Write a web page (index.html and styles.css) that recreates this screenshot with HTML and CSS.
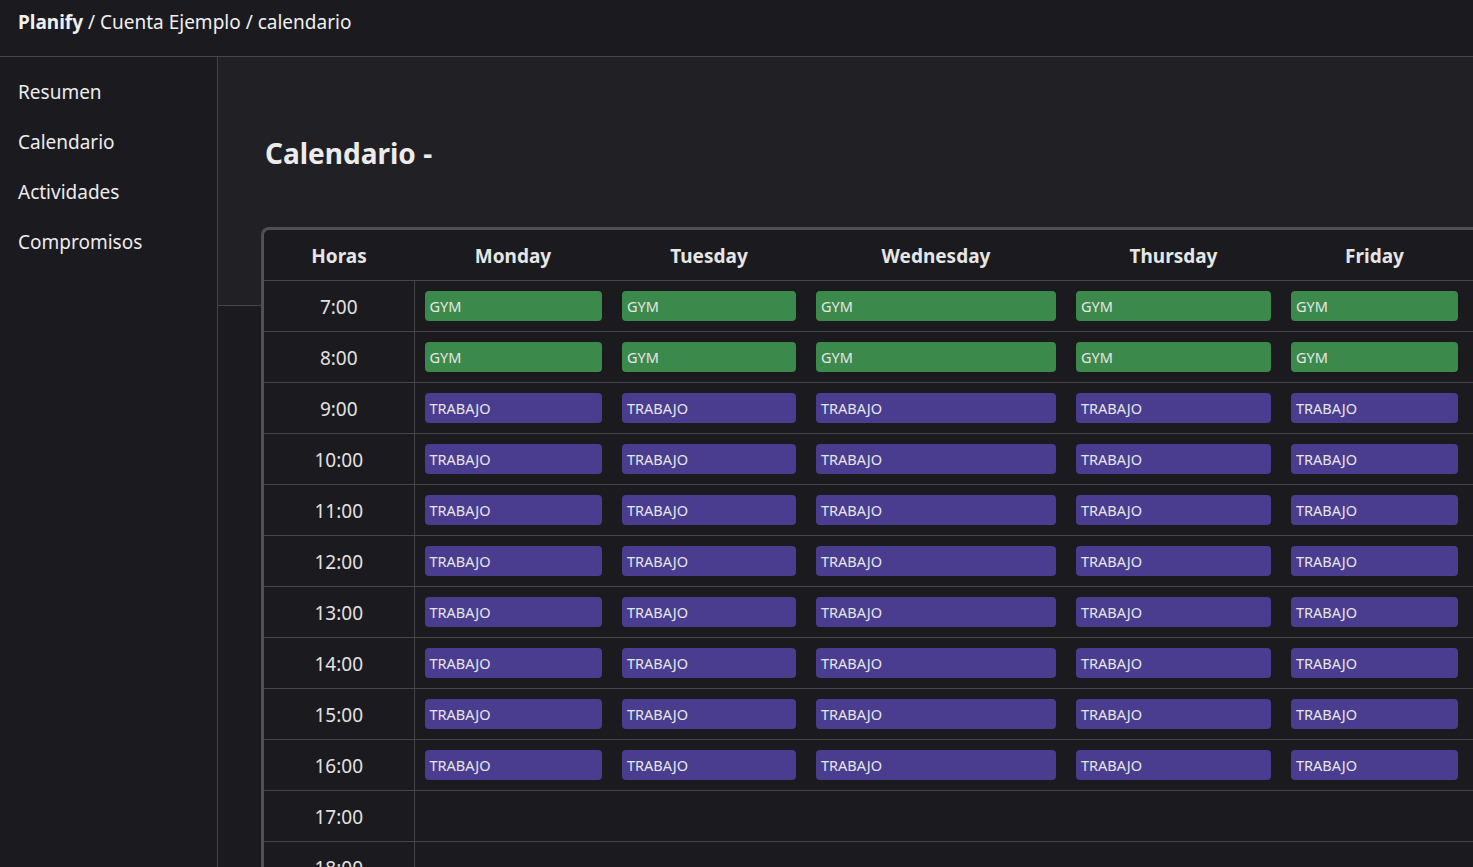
FILE: index.html
```html
<!DOCTYPE html>
<html lang="es">
<head>
<meta charset="utf-8">
<title>Planify - calendario</title>
<link rel="stylesheet" href="styles.css">
</head>
<body>
<header class="topbar">
  <span class="brand">Planify</span> / Cuenta Ejemplo / calendario
</header>
<div class="layout">
  <nav class="sidebar">
    <a class="nav-item">Resumen</a>
    <a class="nav-item">Calendario</a>
    <a class="nav-item">Actividades</a>
    <a class="nav-item">Compromisos</a>
  </nav>
  <main class="main">
    <section class="panel">
      <h1 class="title">Calendario -</h1>
      <div class="table-wrap">
        <table class="cal">
          <colgroup>
            <col class="c-hour"><col class="c-mon"><col class="c-tue"><col class="c-wed"><col class="c-thu"><col class="c-fri"><col class="c-rest">
          </colgroup>
          <thead>
            <tr><th class="hour">Horas</th><th>Monday</th><th>Tuesday</th><th>Wednesday</th><th>Thursday</th><th>Friday</th><th></th></tr>
          </thead>
          <tbody id="rows"></tbody>
        </table>
      </div>
    </section>
  </main>
</div>
<script src="app.js"></script>
</body>
</html>
```
FILE: app.js
```js
const tbody = document.getElementById('rows');
for (let h = 7; h <= 20; h++) {
  const tr = document.createElement('tr');
  const td = document.createElement('td');
  td.className = 'hour';
  td.textContent = h + ':00';
  tr.appendChild(td);
  for (let d = 0; d < 6; d++) {
    const c = document.createElement('td');
    c.className = 'slot';
    if (d < 5) {
      if (h <= 8) c.innerHTML = '<div class="ev gym">GYM</div>';
      else if (h <= 16) c.innerHTML = '<div class="ev work">TRABAJO</div>';
    }
    tr.appendChild(c);
  }
  tbody.appendChild(tr);
}
```
FILE: styles.css
```css
html, body { overflow: hidden; }
body {
  margin: 0;
  background: #1b1a1f;
  color: #e6e6e6;
  font-family: "Noto Sans", "Open Sans", sans-serif;
}
.topbar {
  height: 56px;
  border-bottom: 1px solid #46454a;
  padding: 0 18px;
  font-size: 19px;
  line-height: 44px;
  color: #f0f0f0;
}
.brand { font-weight: 700; }
.layout {
  display: flex;
  min-height: calc(100vh - 57px);
}
.sidebar {
  width: 217px;
  flex: none;
  border-right: 1px solid #46454a;
  padding-top: 10px;
  display: flex;
  flex-direction: column;
}
.nav-item {
  display: block;
  height: 50px;
  line-height: 50px;
  padding: 0 18px;
  font-size: 19px;
  color: #ececec;
}
.main { flex: 1; min-width: 0; }
.panel {
  height: 248px;
  background: #212025;
  border-bottom: 1px solid #46454a;
  padding-left: 43px;
}
.title {
  margin: 0;
  padding-top: 76px;
  padding-left: 4px;
  font-size: 28px;
  line-height: 40px;
  font-weight: 700;
  color: #ececec;
}
.table-wrap {
  margin-top: 54px;
  width: max-content;
  border-top: 3px solid #505055;
  border-left: 3px solid #505055;
  border-top-left-radius: 8px;
  background: #1b1a1f;
  overflow: hidden;
}
.cal {
  border-collapse: collapse;
  table-layout: fixed;
}
.c-hour { width: 150px; }
.c-mon { width: 198px; }
.c-tue { width: 194px; }
.c-wed { width: 260px; }
.c-thu { width: 215px; }
.c-fri { width: 187px; }
.c-rest { width: 200px; }
.cal th {
  height: 48px;
  padding: 2px 0 0;
  font-size: 19px;
  font-weight: 700;
  color: #e6e6e6;
  text-align: center;
  border-bottom: 1px solid #46454a;
}
.cal td {
  height: 50px;
  padding: 0 10px;
  border-bottom: 1px solid #46454a;
  vertical-align: middle;
}
.cal td.hour {
  height: 48px;
  text-align: center;
  padding-top: 2px;
  font-size: 19px;
  color: #e2e2e2;
  border-right: 1px solid #46454a;
}
.ev {
  height: 30px;
  line-height: 30px;
  border-radius: 4px;
  padding: 0 5px;
  font-size: 14.5px;
  color: #e6e6e6;
}
.gym { background: #3b8a4c; }
.work { background: #4a3d8f; }
```
